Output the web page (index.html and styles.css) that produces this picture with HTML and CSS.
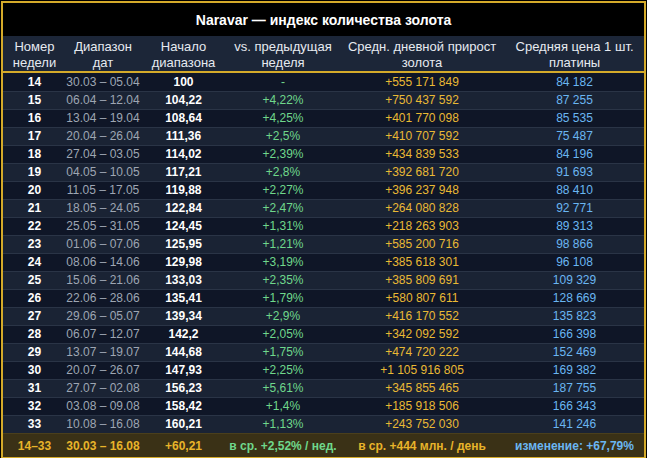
FILE: index.html
```html
<!DOCTYPE html>
<html lang="ru">
<head>
<meta charset="utf-8">
<link rel="stylesheet" href="styles.css">
</head>
<body>
<div class="frame">
<table class="gold">
<colgroup>
<col class="c1"><col class="c2"><col class="c3"><col class="c4"><col class="c5"><col class="c6">
</colgroup>
<thead>
<tr class="title"><th colspan="6">Naravar — индекс количества золота</th></tr>
<tr class="head">
<th>Номер<br>недели</th>
<th>Диапазон<br>дат</th>
<th>Начало<br>диапазона</th>
<th>vs. предыдущая<br>неделя</th>
<th>Средн. дневной прирост<br>золота</th>
<th>Средняя цена 1 шт.<br>платины</th>
</tr>
</thead>
<tbody>
<tr><td class="wk">14</td><td class="dt">30.03 – 05.04</td><td class="st">100</td><td class="vs">-</td><td class="gr">+555 171 849</td><td class="pr">84 182</td></tr>
<tr><td class="wk">15</td><td class="dt">06.04 – 12.04</td><td class="st">104,22</td><td class="vs">+4,22%</td><td class="gr">+750 437 592</td><td class="pr">87 255</td></tr>
<tr><td class="wk">16</td><td class="dt">13.04 – 19.04</td><td class="st">108,64</td><td class="vs">+4,25%</td><td class="gr">+401 770 098</td><td class="pr">85 535</td></tr>
<tr><td class="wk">17</td><td class="dt">20.04 – 26.04</td><td class="st">111,36</td><td class="vs">+2,5%</td><td class="gr">+410 707 592</td><td class="pr">75 487</td></tr>
<tr><td class="wk">18</td><td class="dt">27.04 – 03.05</td><td class="st">114,02</td><td class="vs">+2,39%</td><td class="gr">+434 839 533</td><td class="pr">84 196</td></tr>
<tr><td class="wk">19</td><td class="dt">04.05 – 10.05</td><td class="st">117,21</td><td class="vs">+2,8%</td><td class="gr">+392 681 720</td><td class="pr">91 693</td></tr>
<tr><td class="wk">20</td><td class="dt">11.05 – 17.05</td><td class="st">119,88</td><td class="vs">+2,27%</td><td class="gr">+396 237 948</td><td class="pr">88 410</td></tr>
<tr><td class="wk">21</td><td class="dt">18.05 – 24.05</td><td class="st">122,84</td><td class="vs">+2,47%</td><td class="gr">+264 080 828</td><td class="pr">92 771</td></tr>
<tr><td class="wk">22</td><td class="dt">25.05 – 31.05</td><td class="st">124,45</td><td class="vs">+1,31%</td><td class="gr">+218 263 903</td><td class="pr">89 313</td></tr>
<tr><td class="wk">23</td><td class="dt">01.06 – 07.06</td><td class="st">125,95</td><td class="vs">+1,21%</td><td class="gr">+585 200 716</td><td class="pr">98 866</td></tr>
<tr><td class="wk">24</td><td class="dt">08.06 – 14.06</td><td class="st">129,98</td><td class="vs">+3,19%</td><td class="gr">+385 618 301</td><td class="pr">96 108</td></tr>
<tr><td class="wk">25</td><td class="dt">15.06 – 21.06</td><td class="st">133,03</td><td class="vs">+2,35%</td><td class="gr">+385 809 691</td><td class="pr">109 329</td></tr>
<tr><td class="wk">26</td><td class="dt">22.06 – 28.06</td><td class="st">135,41</td><td class="vs">+1,79%</td><td class="gr">+580 807 611</td><td class="pr">128 669</td></tr>
<tr><td class="wk">27</td><td class="dt">29.06 – 05.07</td><td class="st">139,34</td><td class="vs">+2,9%</td><td class="gr">+416 170 552</td><td class="pr">135 823</td></tr>
<tr><td class="wk">28</td><td class="dt">06.07 – 12.07</td><td class="st">142,2</td><td class="vs">+2,05%</td><td class="gr">+342 092 592</td><td class="pr">166 398</td></tr>
<tr><td class="wk">29</td><td class="dt">13.07 – 19.07</td><td class="st">144,68</td><td class="vs">+1,75%</td><td class="gr">+474 720 222</td><td class="pr">152 469</td></tr>
<tr><td class="wk">30</td><td class="dt">20.07 – 26.07</td><td class="st">147,93</td><td class="vs">+2,25%</td><td class="gr">+1 105 916 805</td><td class="pr">169 382</td></tr>
<tr><td class="wk">31</td><td class="dt">27.07 – 02.08</td><td class="st">156,23</td><td class="vs">+5,61%</td><td class="gr">+345 855 465</td><td class="pr">187 755</td></tr>
<tr><td class="wk">32</td><td class="dt">03.08 – 09.08</td><td class="st">158,42</td><td class="vs">+1,4%</td><td class="gr">+185 918 506</td><td class="pr">166 343</td></tr>
<tr><td class="wk">33</td><td class="dt">10.08 – 16.08</td><td class="st">160,21</td><td class="vs">+1,13%</td><td class="gr">+243 752 030</td><td class="pr">141 246</td></tr>
</tbody>
<tfoot>
<tr><td class="f-gold">14–33</td><td class="f-gold">30.03 – 16.08</td><td class="f-gold">+60,21</td><td class="f-green">в ср. +2,52% / нед.</td><td class="f-gold">в ср. +444 млн. / день</td><td class="f-blue">изменение: +67,79%</td></tr>
</tfoot>
</table>
</div>
</body>
</html>
```
FILE: styles.css
```css
html, body {
  margin: 0;
  padding: 0;
  background: #000;
}
body {
  font-family: "Liberation Sans", Arial, sans-serif;
  color: #fff;
}
.frame {
  margin: 1px 0 0 1px;
  width: 645px;
  box-sizing: border-box;
  border: 2px solid #d4aa2a;
}
.gold {
  width: 641px;
  border-collapse: collapse;
  table-layout: fixed;
}
.c1 { width: 63px; }
.c2 { width: 74px; }
.c3 { width: 87px; }
.c4 { width: 112px; }
.c5 { width: 166px; }
.c6 { width: 139px; }
th, td {
  padding: 0;
  text-align: center;
  white-space: nowrap;
}
.title th {
  background: #000;
  height: 33px;
  font-size: 14px;
  font-weight: bold;
  color: #fff;
}
.head th {
  background: #1c2638;
  height: 31px;
  padding-top: 3px;
  font-size: 13px;
  font-weight: normal;
  line-height: 16px;
  color: #e6eaf0;
  border-bottom: 2px solid #d4aa2a;
}
tbody td {
  height: 17px;
  font-size: 12px;
  line-height: 17px;
  border-top: 1px solid #2a3446;
}
tbody tr:first-child td { border-top: 0; height: 18px; }
tbody tr:nth-child(odd) td { background: #0f1627; }
tbody tr:nth-child(even) td { background: #1a2334; }
.wk, .st { color: #fff; font-weight: bold; }
.dt { color: #9ea6b3; }
.vs { color: #6fd88c; }
.gr { color: #e9b934; }
.pr { color: #6ab6f2; }
tfoot td {
  height: 23px;
  background: #3a3116;
  font-size: 12px;
  font-weight: bold;
  border-top: 1px solid #4a3f1c;
}
.f-gold { color: #e8b42a; }
.f-green { color: #6fd88c; }
.f-blue { color: #6ab6f2; }
```
